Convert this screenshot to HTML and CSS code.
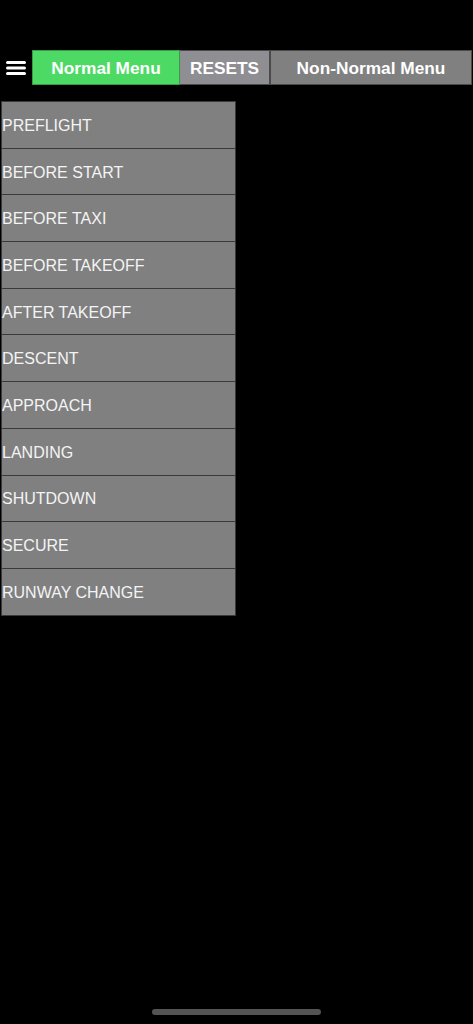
FILE: index.html
```html
<!DOCTYPE html>
<html>
<head>
<meta charset="utf-8">
<link rel="stylesheet" href="styles.css">
</head>
<body>
<div class="screen">
  <div class="topbar">
    <div class="menu-icon">
      <svg width="20" height="16" viewBox="0 0 20 16">
        <path d="M1.5 2.5H18.5M1.5 8H18.5M1.5 13.5H18.5" stroke="#fff" stroke-width="3" stroke-linecap="round"/>
      </svg>
    </div>
    <div class="tab tab-normal">Normal Menu</div>
    <div class="tab tab-resets">RESETS</div>
    <div class="tab tab-nonnormal">Non-Normal Menu</div>
  </div>
  <div class="list">
    <div class="row">PREFLIGHT</div>
    <div class="row">BEFORE START</div>
    <div class="row">BEFORE TAXI</div>
    <div class="row">BEFORE TAKEOFF</div>
    <div class="row">AFTER TAKEOFF</div>
    <div class="row">DESCENT</div>
    <div class="row">APPROACH</div>
    <div class="row">LANDING</div>
    <div class="row">SHUTDOWN</div>
    <div class="row">SECURE</div>
    <div class="row">RUNWAY CHANGE</div>
  </div>
  <div class="spacer"></div>
  <div class="home-indicator"></div>
</div>
</body>
</html>
```
FILE: styles.css
```css
html, body {
  margin: 0;
  padding: 0;
  background: #000;
}
.screen {
  width: 473px;
  height: 1024px;
  display: flex;
  flex-direction: column;
  font-family: "Liberation Sans", Arial, sans-serif;
}
.topbar {
  margin-top: 50px;
  height: 35px;
  display: flex;
}
.menu-icon {
  width: 32px;
  display: flex;
  align-items: center;
  padding-left: 6px;
  box-sizing: border-box;
}
.menu-icon svg {
  display: block;
}
.tab {
  box-sizing: border-box;
  display: flex;
  align-items: center;
  justify-content: center;
  color: #fff;
  font-weight: bold;
  font-size: 17.3px;
  padding-top: 1px;
  border: 1px solid #4a4a4a;
}
.tab-normal {
  width: 148px;
  background: #4cd964;
  border-color: #3a9a48;
}
.tab-resets {
  width: 90px;
  background: #8e8e93;
  border-left: none;
}
.tab-nonnormal {
  width: 202px;
  background: #808080;
  border-left: 1px solid #4a4a4a;
}
.list {
  margin-top: 16px;
  margin-left: 1px;
  width: 235px;
  display: flex;
  flex-direction: column;
  border-top: 1px solid #3a3a3a;
}
.row {
  box-sizing: border-box;
  height: 46.7px;
  background: #808080;
  border-left: 1px solid #3a3a3a;
  border-right: 1px solid #3a3a3a;
  border-bottom: 1px solid #3a3a3a;
  color: #f4f4f4;
  font-size: 16px;
  display: flex;
  align-items: center;
  padding-left: 0;
  padding-top: 2px;
}
.spacer {
  flex: 1;
}
.home-indicator {
  align-self: center;
  width: 169px;
  height: 6px;
  border-radius: 3px;
  background: #545454;
  margin-bottom: 9px;
}
```
